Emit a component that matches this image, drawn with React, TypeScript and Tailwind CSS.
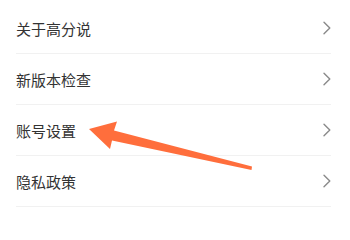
const items = ["关于高分说", "新版本检查", "账号设置", "隐私政策"];

function Chevron() {
  return (
    <svg width="8" height="14" viewBox="0 0 8 14" className="shrink-0">
      <path
        d="M1 1.2 L6.8 7 L1 12.8"
        fill="none"
        stroke="#8a8a8a"
        strokeWidth="1.4"
        strokeLinecap="round"
        strokeLinejoin="round"
      />
    </svg>
  );
}

export default function App() {
  return (
    <div
      className="relative h-[211px] w-[350px] overflow-hidden bg-white"
      style={{ fontFamily: '"Noto Sans CJK SC", "Noto Sans", sans-serif' }}
    >
      <div className="ml-4 mr-[19px] pt-[3px]">
        {items.map((label) => (
          <div
            key={label}
            className="flex h-[51px] items-center justify-between border-b border-[#f1f1f1]"
          >
            <span className="text-[15px] leading-none text-[#333333]">{label}</span>
            <Chevron />
          </div>
        ))}
      </div>

      {/* pointer arrow */}
      <svg
        className="pointer-events-none absolute left-0 top-0"
        width="350"
        height="211"
        viewBox="0 0 350 211"
      >
        <polygon
          points="89,129 117,121.5 114,130.5 252,166.5 251.5,170 112,140.5 110,149"
          fill="#ff6e3c"
        />
      </svg>
    </div>
  );
}
